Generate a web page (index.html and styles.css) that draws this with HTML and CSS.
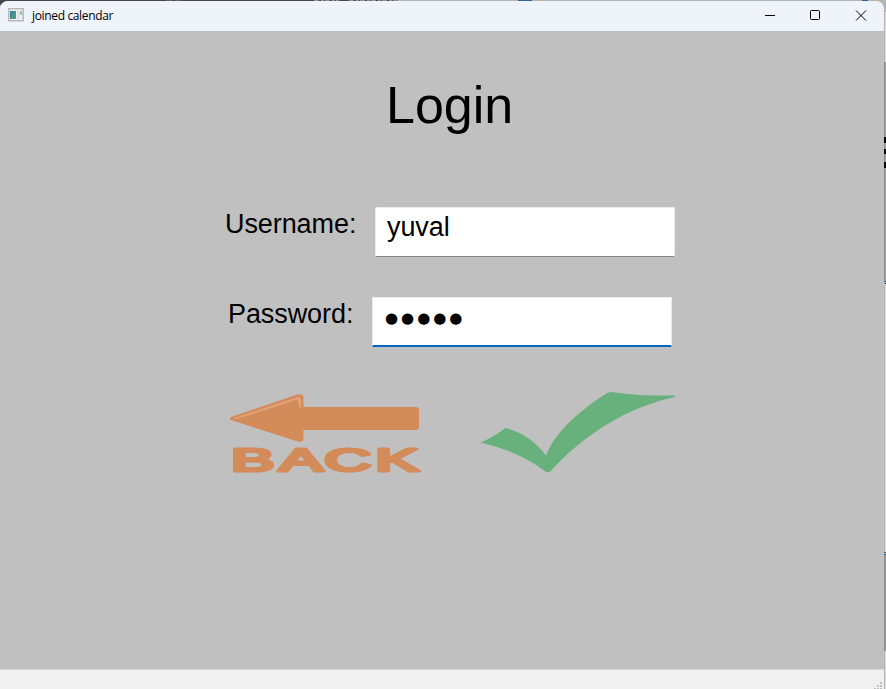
FILE: index.html
```html
<!DOCTYPE html>
<html lang="en">
<head>
<meta charset="utf-8">
<title>joined calendar</title>
<link rel="stylesheet" href="styles.css">
</head>
<body>
<div class="desktop">
  <svg class="backdrop" width="886" height="689" aria-hidden="true">
    <rect width="886" height="689" fill="#b5b5b5"/>
    <rect width="398" height="1" fill="#48444b"/>
    <rect width="6" height="5" fill="#48444b"/>
    <path d="M314 .5h25M349 .5h49" stroke="#92909a" stroke-dasharray="5 2 3 1"/>
    <path d="M166 .5h17" stroke="#66626a" stroke-dasharray="6 3"/>
    <path d="M518 .5h14M862 .5h6" stroke="#2e629a"/>
    <rect x="885" y="12" width="1" height="50" fill="#dedede"/>
    <rect x="884" y="62" width="1" height="219" fill="#8d8d8d"/>
    <rect x="885" y="62" width="1" height="219" fill="#a0a0a0"/>
    <path d="M884 137h2v6h-2zM884 149h2v5h-2zM884 162h2v6h-2z" fill="#08080c"/>
    <path d="M884 281h2v1h-2z" fill="#3d78a7"/><path d="M885 283h1v1h-1z" fill="#111"/>
    <path d="M885 284h1v268h-1zM885 651h1v38h-1z" fill="#dedede"/>
    <path d="M884 552h2v1h-2z" fill="#555"/><path d="M884 554h2v1h-2z" fill="#2473ad"/>
    <rect x="884" y="555" width="2" height="96" fill="#929292"/>
  </svg>
  <div class="window">
    <header class="titlebar">
      <svg class="app-icon" width="16" height="14" viewBox="0 0 16 14">
        <defs><linearGradient id="pane" x2="1" y2="1"><stop stop-color="#3a7ba3"/><stop offset="1" stop-color="#4fa878"/></linearGradient></defs>
        <rect x=".75" y=".75" width="14.5" height="12" fill="#f0f0f0" stroke="#b5b8bc" stroke-width="1.5"/>
        <rect x="2" y="3" width="6" height="8" fill="url(#pane)"/>
        <rect x="9" y="3" width="2.5" height="8" fill="#ddd"/>
        <rect x="12" y="3" width="2" height="4" fill="#8fc3b8"/>
      </svg>
      <span class="caption">joined calendar</span>
      <svg class="controls" width="138" height="30" viewBox="0 0 138 30" fill="none" stroke="#000">
        <path d="M18 14.5h10"/>
        <rect x="63.5" y="9.5" width="9" height="9" rx="1"/>
        <path d="M109 9.5l10 10M119 9.5l-10 10"/>
      </svg>
    </header>
    <main class="login">
      <h1 class="heading">Login</h1>
      <div class="row">
        <span class="label">Username:</span>
        <div class="field">yuval</div>
      </div>
      <div class="row row-password">
        <span class="label">Password:</span>
        <div class="field field-focus"><span class="dots">●●●●●</span></div>
      </div>
      <div class="actions">
        <svg width="210" height="95" viewBox="0 0 210 95">
          <path d="M11 32Q9 33.5 11 35L76 56Q83 58 83.5 54V45H196Q199 45 199 42V25Q199 22 196 22H83.5V13Q83.500 8 77 9.500Z" fill="#d38b59"/>
          <path d="M12.500 33.500L76 12.500Q81 10.500 81 14V22.500H79.500L77.500 14.500L17 34Z" fill="#e1a27a"/>
          <text class="back-text" transform="translate(0 85.800) scale(2.08 1)" x="5.4 28.6 50.3 74.8">BACK</text>
        </svg>
        <svg width="215" height="100" viewBox="0 0 215 100">
          <path d="M10.500 62.500Q24 57 35.500 48Q60 54 76 75.500C84 53 111 29 138 12.500Q141 11.500 146 12.500Q166 16 205 15.500V17C158 27 114 54 80 92H76Q49 71 10.500 62.500Z" fill="#69b17c"/>
        </svg>
      </div>
    </main>
    <footer class="statusbar">
      <svg width="11" height="11" viewBox="0 0 11 11" fill="#bfbfbf">
        <path d="M7 4h2v2H7zM4 7h2v2H4zM7 7h2v2H7zM1 10h2v1H1zM4 10h2v1H4zM7 10h2v1H7z"/>
      </svg>
    </footer>
  </div>
</div>
</body>
</html>
```
FILE: styles.css
```css
* { box-sizing: border-box; }

body {
  margin: 0;
  overflow: hidden;
  font-family: "Liberation Sans", Arial, sans-serif;
  color: #000;
}

.desktop {
  position: relative;
  width: 886px;
  height: 689px;
  padding-top: 1px;
}

.backdrop {
  position: absolute;
  inset: 0;
}

.window {
  position: relative;
  display: flex;
  flex-direction: column;
  width: 884px;
  height: 688px;
  overflow: hidden;
  border-radius: 8px 8px 0 0;
  background: #c0c0c0;
}

.titlebar {
  display: flex;
  align-items: center;
  height: 30px;
  padding-left: 8px;
  background: #eff3fa;
}

.app-icon { margin-top: -2px; }

.caption {
  margin-left: 8px;
  font: 12px/16px "Open Sans", "Noto Sans", sans-serif;
  letter-spacing: -0.35px;
}

.controls { margin-left: auto; margin-right: -1px; }

.login {
  flex: 1;
  padding-top: 43px;
}

.heading {
  margin: 0 0 0 386px;
  font-size: 52px;
  font-weight: 400;
  line-height: 62px;
}

.row {
  display: flex;
  height: 50px;
  margin: 71px 0 0 225px;
  font-size: 27px;
  letter-spacing: -0.08px;
}

.row-password { margin: 40px 0 0 228px; }

.label {
  width: 150px;
  line-height: 34px;
}

.row-password .label { width: 144px; }

.field {
  width: 300px;
  padding: 4px 11px;
  border: 1px solid #ececec;
  border-bottom-color: #858585;
  border-radius: 2px;
  background: #fff;
  line-height: 31px;
}

.field-focus {
  border-bottom: 2px solid #0067c0;
  border-radius: 1px;
}

.dots {
  display: block;
  padding-left: 1px;
  font: 15px/32px "DejaVu Sans", sans-serif;
  letter-spacing: 3px;
}

.actions {
  display: flex;
  align-items: flex-start;
  gap: 40px;
  padding: 38px 0 0 220px;
}

.actions svg:last-child { margin-top: -5px; }

.back-text {
  font-family: "Liberation Sans", Arial, sans-serif;
  font-size: 31px;
  fill: #d38b59;
  stroke: #d38b59;
  stroke-width: 3.2px;
  stroke-linejoin: round;
}

.statusbar {
  display: flex;
  align-items: flex-end;
  justify-content: flex-end;
  height: 20px;
  border-top: 1px solid #d7d7d7;
  background: #f0f0f0;
}
```
